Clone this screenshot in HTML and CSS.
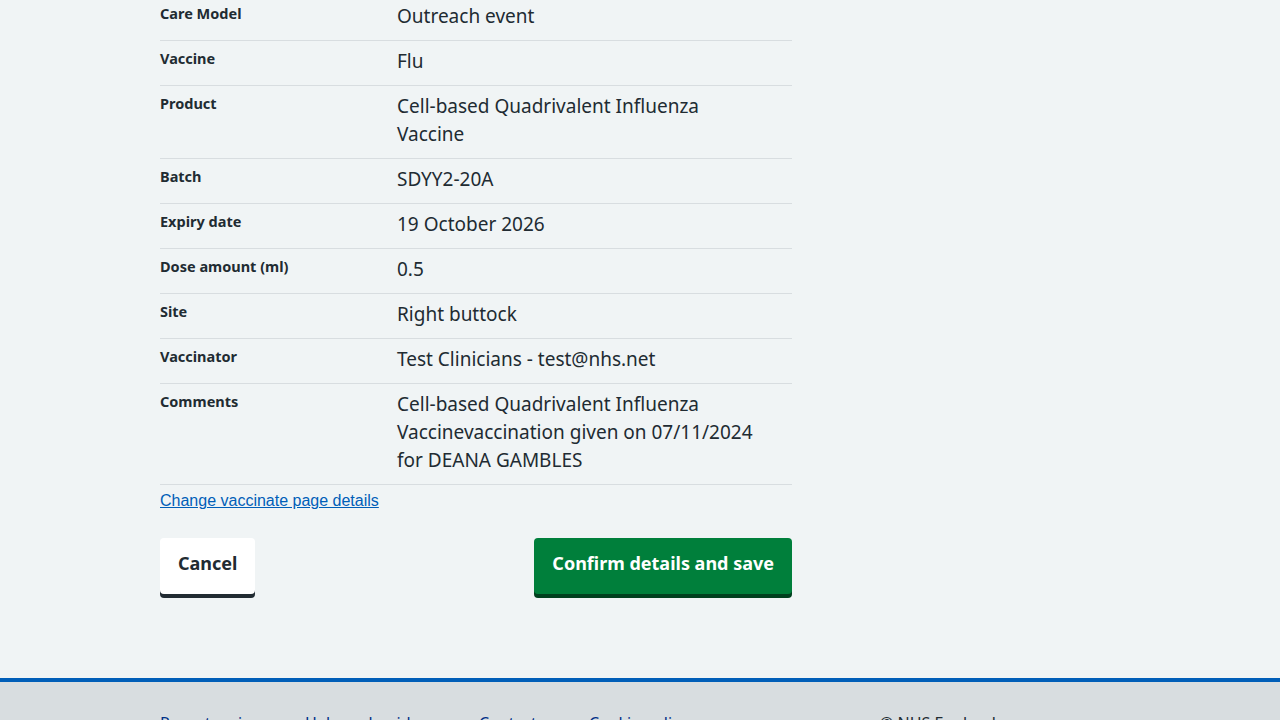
FILE: index.html
```html
<!DOCTYPE html>
<html lang="en">
<head>
<meta charset="utf-8">
<title>Check and confirm</title>
<link rel="stylesheet" href="styles.css">
</head>
<body>
<div class="page">
  <main class="container main">
    <dl class="summary">
      <div class="row"><dt class="key">Care Model</dt><dd class="value">Outreach event</dd></div>
      <div class="row"><dt class="key">Vaccine</dt><dd class="value">Flu</dd></div>
      <div class="row"><dt class="key">Product</dt><dd class="value">Cell-based Quadrivalent Influenza Vaccine</dd></div>
      <div class="row"><dt class="key">Batch</dt><dd class="value">SDYY2-20A</dd></div>
      <div class="row"><dt class="key">Expiry date</dt><dd class="value">19 October 2026</dd></div>
      <div class="row"><dt class="key">Dose amount (ml)</dt><dd class="value">0.5</dd></div>
      <div class="row"><dt class="key">Site</dt><dd class="value">Right buttock</dd></div>
      <div class="row"><dt class="key">Vaccinator</dt><dd class="value">Test Clinicians - test@nhs.net</dd></div>
      <div class="row"><dt class="key">Comments</dt><dd class="value">Cell-based Quadrivalent Influenza Vaccinevaccination given on 07/11/2024 for DEANA GAMBLES</dd></div>
    </dl>
    <a class="change-link" href="#">Change vaccinate page details</a>
    <div class="actions">
      <button class="btn btn-reverse" type="button">Cancel</button>
      <button class="btn btn-primary" type="button">Confirm details and save</button>
    </div>
  </main>
  <footer class="footer">
    <div class="container footer-inner">
      <ul class="footer-links">
        <li><a href="#">Report an issue</a></li>
        <li><a href="#">Help and guidance</a></li>
        <li><a href="#">Contact us</a></li>
        <li><a href="#">Cookie policy</a></li>
      </ul>
      <p class="copyright">© NHS England</p>
    </div>
  </footer>
</div>
</body>
</html>
```

FILE: styles.css
```css
html, body {
  margin: 0;
  padding: 0;
  background: #f0f4f5;
}
body {
  font-family: "Noto Sans", "Liberation Sans", sans-serif;
  color: #212b32;
  height: 720px;
  overflow: hidden;
}
.container {
  width: 960px;
  margin: 0 auto;
}
.main {
  margin-top: -4px;
  padding-bottom: 84px;
}
.summary {
  width: 632px;
  margin: 0;
}
.row {
  display: grid;
  grid-template-columns: 237px 1fr;
  align-items: start;
  border-bottom: 1px solid #d8dde0;
}
.key {
  font-size: 14.5px;
  font-weight: 700;
  line-height: 20px;
  padding: 7px 24px 8px 0;
  margin: 0;
}
.value {
  font-size: 19px;
  line-height: 28px;
  padding: 6px 24px 10px 0;
  margin: 0;
}
.change-link {
  display: inline-block;
  margin-top: 7px;
  font-family: "Liberation Sans", Arial, sans-serif;
  font-size: 16px;
  line-height: 18px;
  color: #005eb8;
  text-decoration: underline;
}
.actions {
  width: 632px;
  display: flex;
  justify-content: space-between;
  margin-top: 27px;
}
.btn {
  font-family: "Noto Sans", "Liberation Sans", sans-serif;
  font-size: 18px;
  font-weight: 700;
  line-height: 28px;
  padding: 9px 16px 15px;
  border: 2px solid transparent;
  border-radius: 4px;
  cursor: pointer;
  height: 56px;
}
.btn-reverse {
  background: #ffffff;
  color: #212b32;
  box-shadow: 0 4px 0 #212b32;
}
.btn-primary {
  background: #007f3b;
  color: #ffffff;
  box-shadow: 0 4px 0 #00401e;
}
.footer {
  background: #d8dde0;
  border-top: 4px solid #005eb8;
}
.footer-inner {
  display: flex;
  padding-top: 29px;
  padding-bottom: 24px;
}
.footer-links {
  list-style: none;
  margin: 0;
  padding: 0;
  display: flex;
  width: 720px;
  font-size: 16px;
  line-height: 24px;
}
.footer-links li:nth-child(1) { width: 145px; }
.footer-links li:nth-child(2) { width: 174px; }
.footer-links li:nth-child(3) { width: 110px; }
.footer-links a {
  color: #003087;
  text-decoration: none;
}
.copyright {
  margin: 0;
  font-size: 16px;
  line-height: 24px;
}
```
